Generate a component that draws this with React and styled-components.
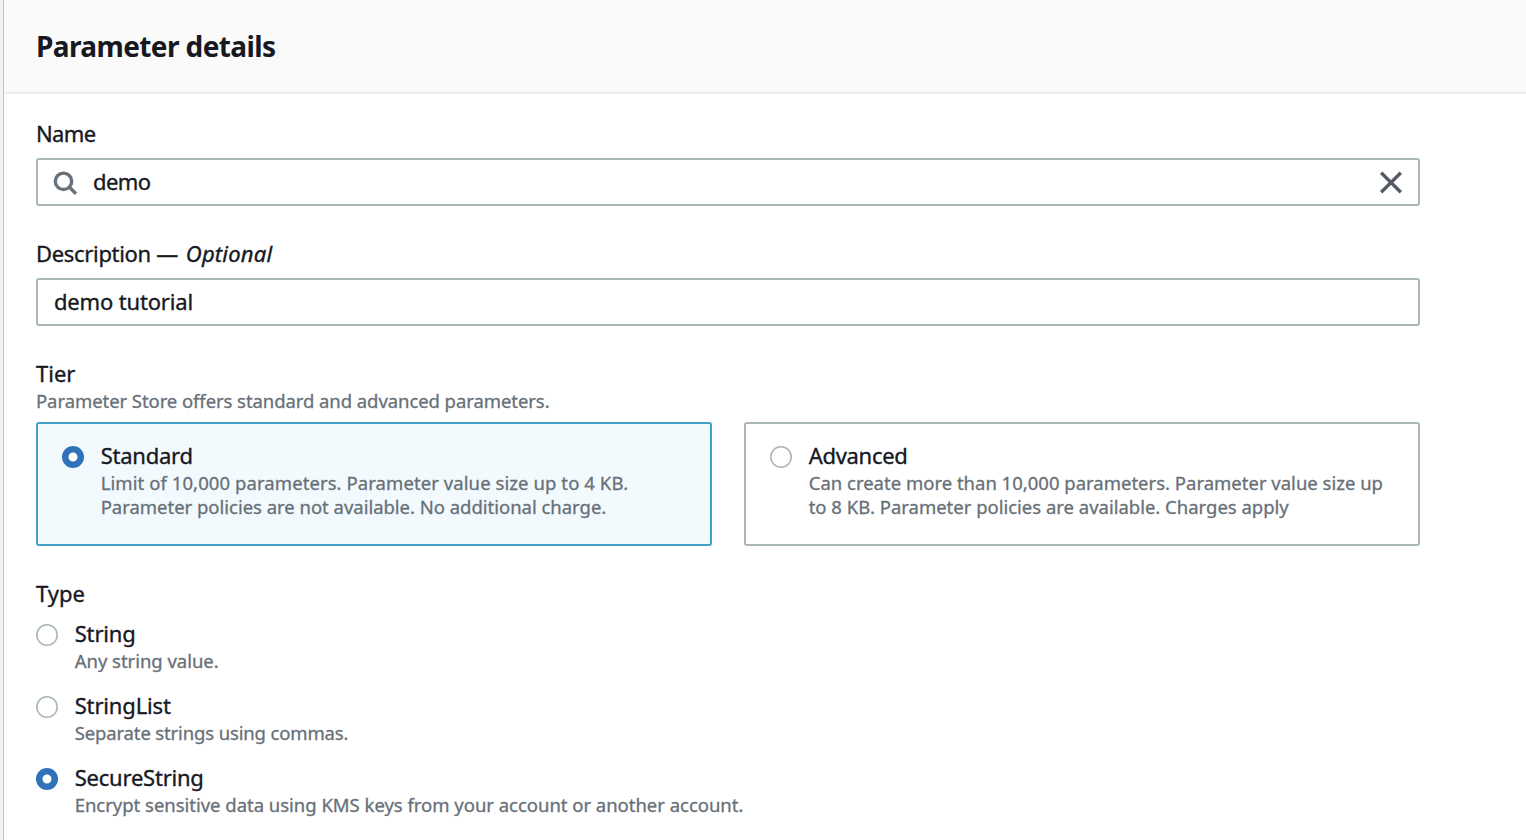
import React, { useState } from 'react';
import styled, { createGlobalStyle, css } from 'styled-components';

const GlobalStyle = createGlobalStyle`
  * { box-sizing: border-box; }
  body {
    margin: 0;
    background: #fff;
    color: #16191f;
    font-family: 'Noto Sans', 'Open Sans', sans-serif;
    font-size: 22px;
    overflow: hidden;
  }
`;

const tracking = css`
  letter-spacing: ${({ $track = 0 }) => $track}px;
`;

const Page = styled.main`
  display: flex;
  height: 840px;
  background: #f2f3f3;
`;

const Panel = styled.section`
  flex: 1;
  margin-left: 3px;
  border-left: 1px solid #bfc3c3;
  background: #fff;
`;

const Header = styled.header`
  height: 94px;
  padding: 26px 32px 0;
  background: #fafafa;
  border-bottom: 2px solid #eaeded;
`;

const Title = styled.h2`
  margin: 0;
  font-size: 28px;
  font-weight: 700;
  line-height: 40px;
  letter-spacing: -0.6px;
`;

const Form = styled.form`
  display: flex;
  flex-direction: column;
  gap: 32px;
  width: 1448px;
  padding: 24px 32px 0;
`;

const Field = styled.div`
  display: flex;
  flex-direction: column;
`;

const Label = styled.div`
  line-height: 30px;
  white-space: nowrap;
  -webkit-text-stroke: 0.35px currentColor;
  ${tracking}
`;

const Optional = styled.em`
  margin-left: 2.5px;
  ${tracking}
`;

const Hint = styled.div`
  margin-top: 1px;
  color: #687078;
  font-size: 18.5px;
  line-height: 24px;
  white-space: nowrap;
  -webkit-text-stroke: 0.3px currentColor;
  ${tracking}
`;

const HintLine = styled.span`
  display: block;
  ${tracking}
`;

const InputBox = styled.div`
  display: flex;
  align-items: center;
  height: 48px;
  margin-top: 10px;
  padding: 0 14px 0 15px;
  border: 2px solid #aab7b8;
  border-radius: 3px;
  background: #fff;
`;

const TextInput = styled.input`
  flex: 1;
  min-width: 0;
  height: 32px;
  margin: 0;
  padding: 0 0 2px ${({ $inset = 0 }) => $inset}px;
  border: 0;
  outline: 0;
  background: transparent;
  color: #16191f;
  font: inherit;
  -webkit-text-stroke: 0.35px currentColor;
  ${tracking}
`;

const Icon = styled.svg`
  flex: none;
  width: 26px;
  height: 26px;
  fill: none;
  stroke: ${({ $color }) => $color};
  stroke-width: 3.4;
`;

const Tiles = styled.div`
  display: grid;
  grid-template-columns: 1fr 1fr;
  gap: 32px;
  margin-top: 9px;
`;

const Tile = styled.label`
  display: flex;
  height: 124px;
  padding: 16px 24px;
  border: 2px solid ${({ $selected }) => ($selected ? '#429fc6' : '#aab7b8')};
  border-radius: 3px;
  background: ${({ $selected }) => ($selected ? '#f2fafd' : '#fff')};
`;

const RadioList = styled.div`
  display: flex;
  flex-direction: column;
  gap: 17px;
  margin-top: 10px;
`;

const RadioRow = styled.label`
  display: flex;
`;

const Radio = styled.input.attrs({ type: 'radio' })`
  appearance: none;
  flex: none;
  width: 22px;
  height: 22px;
  margin: 6px 16.7px 0 0;
  border-radius: 50%;
  background: #fff;
  box-shadow: inset 0 0 0 ${({ checked }) => (checked ? '6.5px #3072b9' : '1.6px #aab7b8')};
`;

const tiers = [
  {
    name: 'Standard',
    track: -0.25,
    lines: [
      ['Limit of 10,000 parameters. Parameter value size up to 4 KB.', 0.08],
      ['Parameter policies are not available. No additional charge.', -0.02],
    ],
  },
  {
    name: 'Advanced',
    track: -0.3,
    lines: [
      ['Can create more than 10,000 parameters. Parameter value size up', 0],
      ['to 8 KB. Parameter policies are available. Charges apply', -0.01],
    ],
  },
];

const types = [
  { name: 'String', track: -0.15, lines: [['Any string value.', -0.03]] },
  { name: 'StringList', track: -0.15, lines: [['Separate strings using commas.', -0.14]] },
  {
    name: 'SecureString',
    track: -0.22,
    lines: [['Encrypt sensitive data using KMS keys from your account or another account.', -0.02]],
  },
];

function Choice({ as: Container, group, option, selected, onSelect }) {
  return (
    <Container $selected={selected}>
      <Radio name={group} checked={selected} onChange={() => onSelect(option.name)} />
      <div>
        <Label $track={option.track}>{option.name}</Label>
        <Hint>
          {option.lines.map(([text, track]) => (
            <HintLine key={text} $track={track}>{text}</HintLine>
          ))}
        </Hint>
      </div>
    </Container>
  );
}

export default function App() {
  const [name, setName] = useState('demo');
  const [description, setDescription] = useState('demo tutorial');
  const [tier, setTier] = useState('Standard');
  const [type, setType] = useState('SecureString');

  return (
    <Page>
      <GlobalStyle />
      <Panel>
        <Header>
          <Title>Parameter details</Title>
        </Header>
        <Form>
          <Field>
            <Label $track={-0.6}>Name</Label>
            <InputBox>
              <Icon $color="#687078" viewBox="0 0 26 26">
                <circle cx="10.5" cy="12.3" r="8.2" />
                <path d="M16.1 17.9 23 24.8" />
              </Icon>
              <TextInput $inset={14} $track={-0.6} value={name} onChange={(e) => setName(e.target.value)} />
              <Icon $color="#545b64" viewBox="0 0 26 26" onClick={() => setName('')}>
                <path d="M3.2 3.7 22.8 23.3M22.8 3.7 3.2 23.3" />
              </Icon>
            </InputBox>
          </Field>

          <Field>
            <Label $track={-0.32}>
              Description — <Optional $track={0.2}>Optional</Optional>
            </Label>
            <InputBox>
              <TextInput $inset={1} $track={-0.17} value={description} onChange={(e) => setDescription(e.target.value)} />
            </InputBox>
          </Field>

          <Field>
            <Label>Tier</Label>
            <Hint $track={-0.07}>Parameter Store offers standard and advanced parameters.</Hint>
            <Tiles>
              {tiers.map((option) => (
                <Choice
                  key={option.name}
                  as={Tile}
                  group="tier"
                  option={option}
                  selected={tier === option.name}
                  onSelect={setTier}
                />
              ))}
            </Tiles>
          </Field>

          <Field>
            <Label>Type</Label>
            <RadioList>
              {types.map((option) => (
                <Choice
                  key={option.name}
                  as={RadioRow}
                  group="type"
                  option={option}
                  selected={type === option.name}
                  onSelect={setType}
                />
              ))}
            </RadioList>
          </Field>
        </Form>
      </Panel>
    </Page>
  );
}
